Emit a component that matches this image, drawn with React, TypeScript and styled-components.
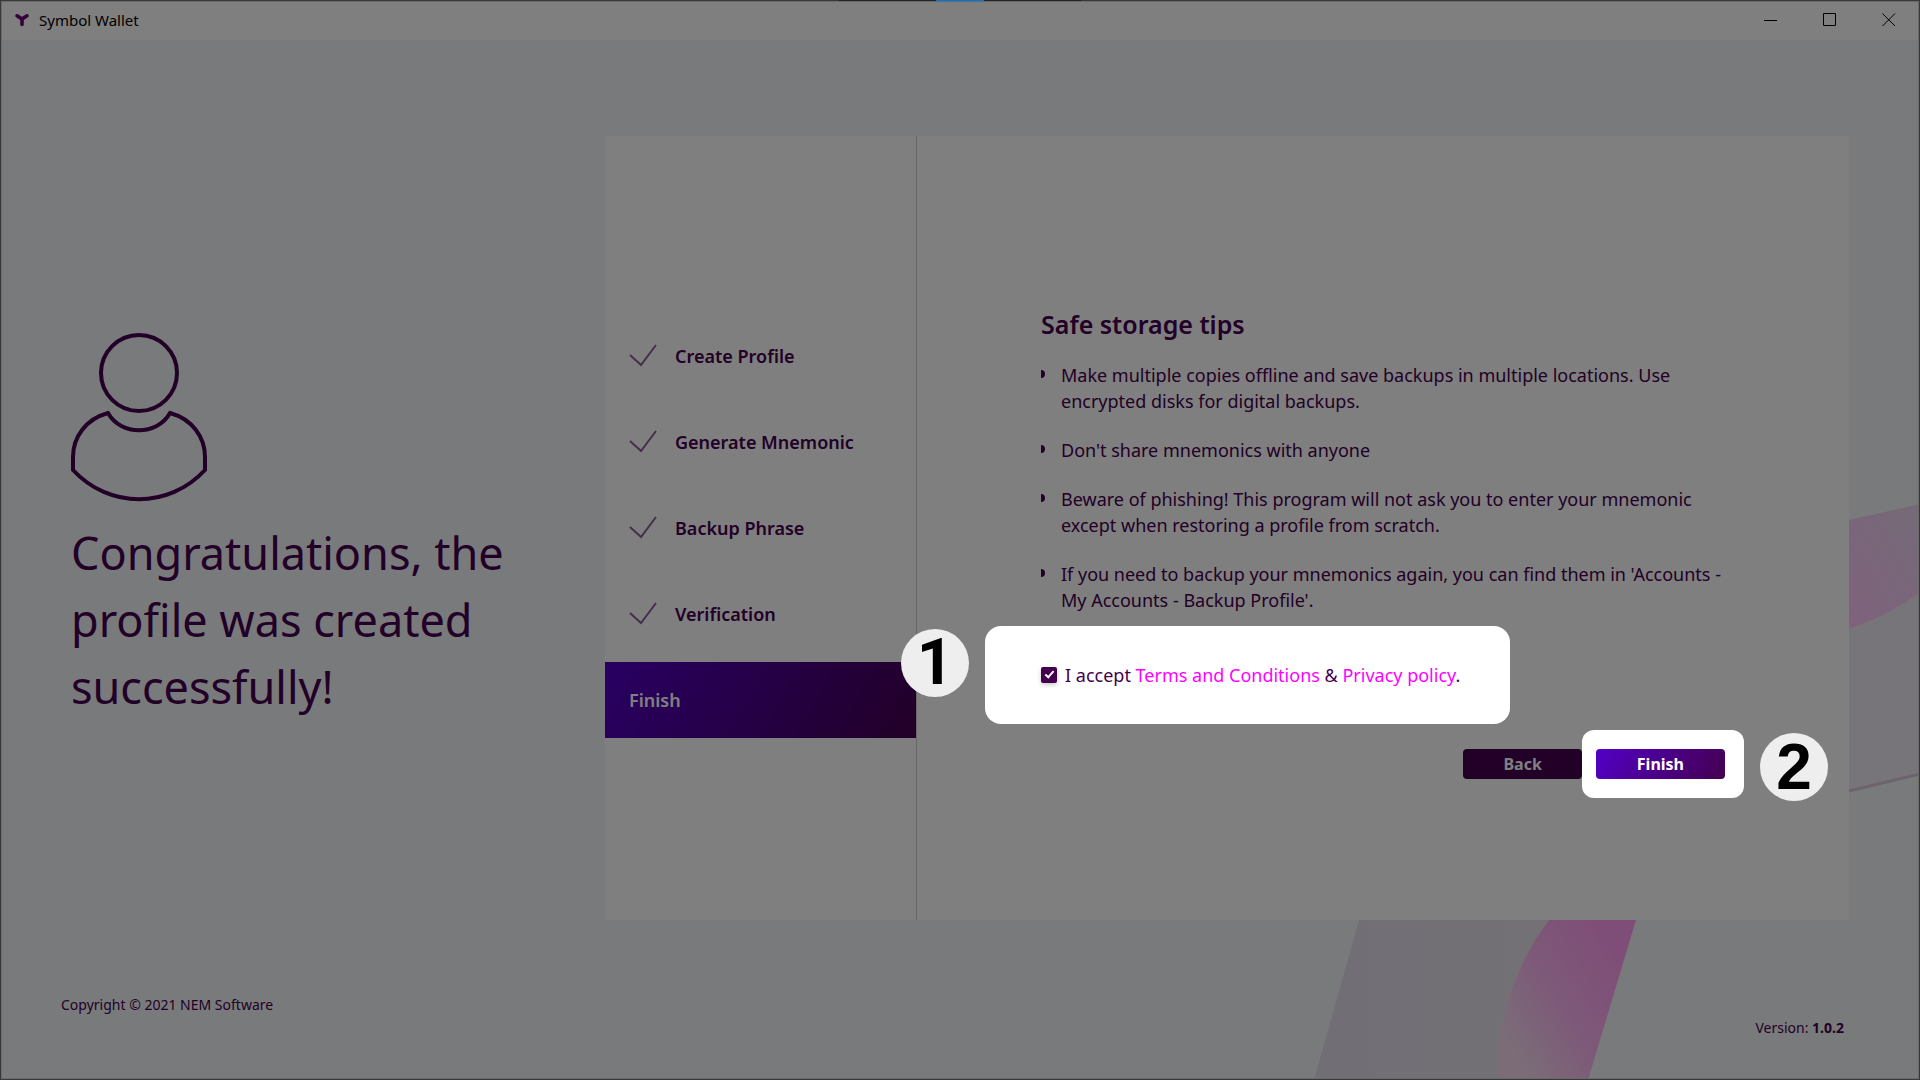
import React from 'react';
import styled, { createGlobalStyle } from 'styled-components';

const GlobalStyle = createGlobalStyle`
  *, *::before, *::after { box-sizing: border-box; }
  body {
    margin: 0;
    font-family: "Noto Sans", "Open Sans", sans-serif;
    color: #44004e;
    background: #f3f5f8;
  }
`;

const Window = styled.div`
  position: relative;
  display: flex;
  flex-direction: column;
  min-height: 100vh;
  padding: 1px;
  overflow: hidden;
  background: #f3f5f8;

  &::after {
    content: "";
    position: absolute;
    inset: 0;
    z-index: 1;
    background: rgba(0, 0, 0, 0.5);
    box-shadow: inset 0 0 0 1px #383838, inset 0 0 0 2px #6a6a6a;
    pointer-events: none;
  }
`;

const TopAccent = styled.div`
  position: absolute;
  top: 0;
  left: 50%;
  z-index: 2;
  width: 242px;
  height: 1px;
  transform: translateX(-50%);
  background: linear-gradient(90deg, #222222 40%, #0078d7 40% 60%, #222222 60%);
`;

const TitleBar = styled.header`
  display: flex;
  align-items: center;
  height: 39px;
  padding: 0 5px 2px 13px;
  gap: 9px;
  background: #ffffff;
  color: #000000;
  font-size: 15px;
`;

const AppName = styled.span`
  flex: 1;
`;

const WindowButton = styled.button`
  display: grid;
  place-items: center;
  width: 50px;
  height: 36px;
  padding: 0;
  border: 0;
  background: none;
  color: #000000;
`;

const Art = styled.svg`
  position: absolute;
  right: 0;
  bottom: 0;
  width: 620px;
  height: 600px;
`;

const Main = styled.main`
  display: flex;
  flex: 1;
  padding: 96px 70px 0 0;
`;

const Hero = styled.section`
  display: flex;
  flex-direction: column;
  justify-content: center;
  width: 604px;
  padding: 0 70px 3px;
`;

const HeroTitle = styled.h1`
  margin: 16px 0 0;
  font-size: 45px;
  line-height: 67px;
  font-weight: 400;
`;

const Card = styled.section`
  position: relative;
  display: flex;
  flex: 1;
  min-height: 640px;
  background: #ffffff;
  border-radius: 4px;
`;

const Steps = styled.ol`
  display: flex;
  flex-direction: column;
  justify-content: center;
  gap: 10px;
  width: 312px;
  margin: 0;
  padding: 0 0 1px;
  list-style: none;
  border-right: 1px solid #d0cbd6;
`;

const Step = styled.li<{ $active?: boolean }>`
  display: flex;
  align-items: center;
  gap: 18px;
  height: 76px;
  padding: 0 24px;
  font-size: 18px;
  font-weight: 600;
  color: ${(p) => (p.$active ? '#ffffff' : '#44004e')};
  background: ${(p) => (p.$active ? 'linear-gradient(120deg, #5200c6, #44004e)' : 'none')};
`;

const Content = styled.div`
  display: flex;
  flex: 1;
  flex-direction: column;
  justify-content: center;
  padding: 27px 124px 0;
`;

const Heading = styled.h2`
  margin: 0 0 19px;
  font-size: 25px;
  line-height: 38px;
  font-weight: 600;
`;

const Tips = styled.ul`
  display: flex;
  flex-direction: column;
  gap: 23px;
  margin: 0;
  padding: 0;
  list-style: none;
`;

const Tip = styled.li`
  display: flex;
  gap: 16px;
  font-size: 18px;
  line-height: 26px;

  &::before {
    content: "";
    flex: none;
    width: 4px;
    height: 8px;
    margin-top: 8px;
    background: #44004e;
    border-radius: 0 4px 4px 0;
  }
`;

const Spotlight = styled.div`
  position: relative;
  z-index: 2;
  display: flex;
  align-items: center;
  background: #ffffff;
`;

const TermsSpotlight = styled(Spotlight)`
  align-self: flex-start;
  height: 98px;
  margin: 13px 0 6px -56px;
  padding: 0 50px 0 56px;
  border-radius: 16px;
`;

const FinishSpotlight = styled(Spotlight)`
  height: 68px;
  margin-right: -19px;
  padding: 0 19px 0 14px;
  border-radius: 12px;
`;

const Badge = styled.span<{ $side: 'left' | 'right'; $face: string }>`
  position: absolute;
  top: 3px;
  ${(p) => p.$side}: -84px;
  width: 68px;
  height: 68px;
  border-radius: 50%;
  background: #eeeeee;
  color: #000000;
  font: 700 64px/68px ${(p) => p.$face}, Arial, sans-serif;
  text-align: center;
`;

const Accept = styled.div`
  display: flex;
  align-items: center;
  gap: 8px;
  font-size: 18px;
  line-height: 26px;
`;

const Checkbox = styled.input`
  appearance: none;
  display: grid;
  place-items: center;
  width: 16px;
  height: 16px;
  margin: 0;
  border-radius: 2px;
  background: #44004e;
  box-shadow: 0 2px 4px rgba(0, 0, 0, 0.2);

  &:checked::before {
    content: "";
    width: 9px;
    height: 5px;
    margin-bottom: 2px;
    border: solid #ffffff;
    border-width: 0 0 2px 2px;
    transform: rotate(-48deg);
  }
`;

const Link = styled.a`
  color: #ff00ff;
  text-decoration: none;
`;

const Actions = styled.div`
  display: flex;
  justify-content: flex-end;
  align-items: center;
  margin-bottom: -19px;
`;

const Button = styled.button<{ $primary?: boolean }>`
  height: 30px;
  padding: 0 ${(p) => (p.$primary ? 41 : 40)}px;
  border: 0;
  border-radius: 4px;
  font: 700 16px/30px "Noto Sans", "Open Sans", sans-serif;
  color: #ffffff;
  background: ${(p) => (p.$primary ? 'linear-gradient(120deg, #5200c6, #44004e)' : '#44004e')};
`;

const Footer = styled.footer`
  position: relative;
  display: flex;
  justify-content: space-between;
  height: 159px;
  padding: 75px 75px 0 60px;
  font-size: 14px;
  line-height: 20px;
`;

const Version = styled.span`
  padding-top: 23px;
`;

const steps = ['Create Profile', 'Generate Mnemonic', 'Backup Phrase', 'Verification'];

const tips = [
  'Make multiple copies offline and save backups in multiple locations. Use encrypted disks for digital backups.',
  "Don't share mnemonics with anyone",
  'Beware of phishing! This program will not ask you to enter your mnemonic except when restoring a profile from scratch.',
  "If you need to backup your mnemonics again, you can find them in 'Accounts - My Accounts - Backup Profile'.",
];

const SymbolLogo = () => (
  <svg width="16" height="14" viewBox="0 0 16 14" aria-hidden="true">
    <path
      d="M3 2.8 L8 6 L13 2.8 M8 6 V11.5"
      fill="none"
      stroke="#6a0078"
      strokeWidth="3.6"
      strokeLinecap="round"
    />
  </svg>
);

const BackgroundArt = () => (
  <Art viewBox="0 0 620 600" aria-hidden="true">
    <defs>
      <linearGradient id="pinkBand" gradientUnits="userSpaceOnUse" x1="195" y1="540" x2="310" y2="470">
        <stop offset="0" stopColor="#f6d9f0" />
        <stop offset="0.5" stopColor="#fbb2f2" />
        <stop offset="1" stopColor="#ff9df0" />
      </linearGradient>
      <linearGradient id="pinkTip" x1="0" y1="1" x2="1" y2="0">
        <stop offset="0" stopColor="#ffc4fa" />
        <stop offset="1" stopColor="#e9d5ee" />
      </linearGradient>
      <linearGradient id="mistEdge" x1="0" y1="0" x2="1" y2="0">
        <stop offset="0" stopColor="#e4dced" />
        <stop offset="1" stopColor="#e6e3ea" />
      </linearGradient>
    </defs>
    <path d="M59 440 H249 Q196 510 198 600 H14 Z" fill="url(#mistEdge)" />
    <path d="M249 440 H336 L288 600 H198 Q196 510 249 440 Z" fill="url(#pinkBand)" />
    <path d="M549 149 Q585 137 620 113 V294 L549 311 Z" fill="#eeebf5" />
    <path d="M549 40 L620 24 V113 Q585 137 549 149 Z" fill="url(#pinkTip)" />
    <path d="M549 311 L620 294" stroke="#d9c6dc" strokeWidth="3" />
  </Art>
);

const PersonIcon = () => (
  <svg width="136" height="170" viewBox="0 0 136 170" fill="none" stroke="#44004e" strokeWidth="4" aria-hidden="true">
    <circle cx="68" cy="40" r="38" />
    <path d="M37 80 C15 86 2 104 2 124 V137 C38 176 98 176 134 137 V124 C134 104 121 86 99 80 C86 103 50 103 37 80 Z" />
  </svg>
);

const CheckIcon = () => (
  <svg width="28" height="24" viewBox="0 0 28 24" fill="none" stroke="#8a5c92" strokeWidth="2" aria-hidden="true">
    <path d="M1 11 L12 21 L27 1" />
  </svg>
);

export default function App() {
  return (
    <Window>
      <GlobalStyle />
      <BackgroundArt />
      <TopAccent />
      <TitleBar>
        <SymbolLogo />
        <AppName>Symbol Wallet</AppName>
        <WindowButton aria-label="Minimize">
          <svg width="14" height="14" stroke="currentColor"><path d="M0 7.5 H13" /></svg>
        </WindowButton>
        <WindowButton aria-label="Maximize">
          <svg width="14" height="14" stroke="currentColor" fill="none"><path d="M0.5 0.5 H12.5 V12.5 H0.5 Z" /></svg>
        </WindowButton>
        <WindowButton aria-label="Close">
          <svg width="14" height="14" stroke="currentColor"><path d="M0.5 0.5 L13 13 M13 0.5 L0.5 13" /></svg>
        </WindowButton>
      </TitleBar>
      <Main>
        <Hero>
          <PersonIcon />
          <HeroTitle>Congratulations, the profile was created successfully!</HeroTitle>
        </Hero>
        <Card>
          <Steps>
            {steps.map((name) => (
              <Step key={name}>
                <CheckIcon />
                {name}
              </Step>
            ))}
            <Step $active>Finish</Step>
          </Steps>
          <Content>
            <Heading>Safe storage tips</Heading>
            <Tips>
              {tips.map((tip) => (
                <Tip key={tip}>{tip}</Tip>
              ))}
            </Tips>
            <TermsSpotlight>
              <Badge $side="left" $face="Roboto">1</Badge>
              <Accept>
                <Checkbox id="accept" type="checkbox" defaultChecked />
                <label htmlFor="accept">
                  I accept <Link href="#terms">Terms and Conditions</Link> &amp;{' '}
                  <Link href="#privacy">Privacy policy</Link>.
                </label>
              </Accept>
            </TermsSpotlight>
            <Actions>
              <Button>Back</Button>
              <FinishSpotlight>
                <Button $primary>Finish</Button>
                <Badge $side="right" $face='"Liberation Sans"'>2</Badge>
              </FinishSpotlight>
            </Actions>
          </Content>
        </Card>
      </Main>
      <Footer>
        <span>Copyright © 2021 NEM Software</span>
        <Version>
          Version: <b>1.0.2</b>
        </Version>
      </Footer>
    </Window>
  );
}
